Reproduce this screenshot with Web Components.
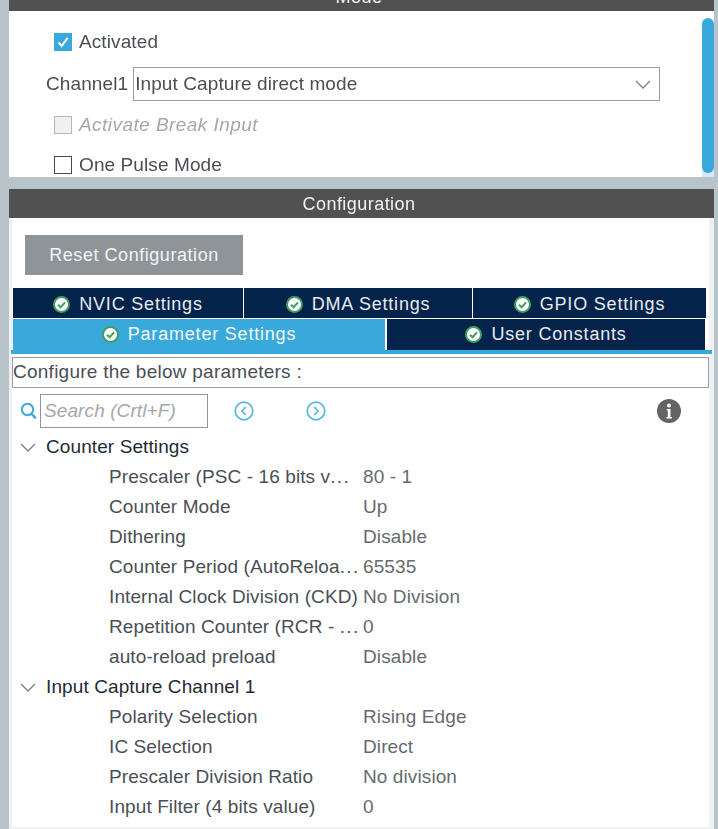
<!DOCTYPE html>
<html>
<head>
<meta charset="utf-8">
<style>
  html, body { margin: 0; height: 829px; overflow: hidden; background: #b8c4ca; }
  body { font: 19px "Liberation Sans", Arial, sans-serif; color: #4a4f55; }
</style>
</head>
<body>
<cube-app>
  <cube-panel title="Mode" slot="mode">
    <mode-form></mode-form>
  </cube-panel>
  <cube-panel title="Configuration" slot="config">
    <config-form></config-form>
  </cube-panel>
</cube-app>

<script>
const checkIcon = `<svg width="17" height="17" viewBox="0 0 17 17"><circle cx="8.5" cy="8.5" r="7.5" fill="#fff" stroke="#3f9e63" stroke-width="2"/><path d="M5 8.7l2.6 2.5L12 6.4" fill="none" stroke="#3f9e63" stroke-width="2"/></svg>`;
const chevron = `<svg width="16" height="9" viewBox="0 0 16 9"><path d="M1 1l7 7 7-7" fill="none" stroke="#7d8388" stroke-width="1.4"/></svg>`;

class CubeApp extends HTMLElement {
  connectedCallback() {
    this.attachShadow({ mode: 'open' });
    this.shadowRoot.innerHTML = `
      <style>
        :host { display: block; padding: 0 4px 0 9px; margin-top: -18px; filter: blur(.35px); }
        .stack { display: flex; flex-direction: column; gap: 12px; }
      </style>
      <div class="stack">
        <slot name="mode"></slot>
        <slot name="config"></slot>
      </div>`;
  }
}

class CubePanel extends HTMLElement {
  connectedCallback() {
    this.attachShadow({ mode: 'open' });
    this.shadowRoot.innerHTML = `
      <style>
        :host { display: block; }
        header {
          height: 29px; box-sizing: border-box; background: #505150; color: #f2f2f2;
          display: flex; align-items: center; justify-content: center;
          font-size: 18px; letter-spacing: .45px; padding: 1px 5px 0 0;
        }
      </style>
      <header>${this.getAttribute('title')}</header>
      <slot></slot>`;
  }
}

class CubeCheck extends HTMLElement {
  connectedCallback() {
    const state = this.getAttribute('state') || 'off';
    const tick = state === 'on'
      ? '<svg width="18" height="18" viewBox="0 0 18 18"><path d="M4.5 9.5l3.2 3.4 6-8" fill="none" stroke="#fff" stroke-width="2"/></svg>' : '';
    this.attachShadow({ mode: 'open' });
    this.shadowRoot.innerHTML = `
      <style>
        :host { display: flex; align-items: center; gap: 7px; height: 20px; letter-spacing: .1px; }
        .box { width: 18px; height: 18px; box-sizing: border-box; flex: none; }
        .on { background: #39a9dc; }
        .off { border: 1.5px solid #4a4a4a; background: #fff; }
        .dis { border: 1.5px solid #b5b8ba; background: #eff0f1; }
        svg { display: block; }
        .dis + span { color: #a5a8aa; font-style: italic; letter-spacing: .45px; }
      </style>
      <div class="box ${state}">${tick}</div><span><slot></slot></span>`;
  }
}

class CubeSelect extends HTMLElement {
  connectedCallback() {
    this.attachShadow({ mode: 'open' });
    this.shadowRoot.innerHTML = `
      <style>
        :host {
          display: flex; align-items: center; justify-content: space-between;
          width: 527px; height: 34px; box-sizing: border-box;
          border: 1.5px solid #9a9ea1; padding: 0 8px 0 1px; letter-spacing: .1px;
        }
        svg { display: block; }
      </style>
      <span><slot></slot></span>${chevron}`;
  }
}

class ModeForm extends HTMLElement {
  connectedCallback() {
    this.attachShadow({ mode: 'open' });
    this.shadowRoot.innerHTML = `
      <style>
        :host {
          display: block; height: 166px; box-sizing: border-box; background: #fff;
          padding-top: 21px; position: relative;
        }
        .check { margin-left: 45px; }
        .channel { display: flex; align-items: center; gap: 5px; margin: 15px 0 14px 37px; letter-spacing: .1px; }
        .gap { height: 20px; }
        .track {
          position: absolute; right: 0; bottom: 0; width: 12px; height: 10px; background: #d6e8f4;
        }
        .scroll {
          position: absolute; right: 0; top: 7px; width: 12px; height: 155px;
          background: #39a9dc; border-radius: 6px;
        }
      </style>
      <cube-check class="check" state="on">Activated</cube-check>
      <div class="channel"><span>Channel1</span><cube-select>Input Capture direct mode</cube-select></div>
      <cube-check class="check" state="dis">Activate Break Input</cube-check>
      <div class="gap"></div>
      <cube-check class="check" state="off">One Pulse Mode</cube-check>
      <div class="track"></div>
      <div class="scroll"></div>`;
  }
}

class CubeTab extends HTMLElement {
  connectedCallback() {
    this.attachShadow({ mode: 'open' });
    this.shadowRoot.innerHTML = `
      <style>
        :host {
          display: flex; align-items: center; justify-content: center; gap: 9px;
          background: #03234b; color: #e6ebf0; font-size: 18px; letter-spacing: .8px;
        }
        :host([active]) { background: #39a9dc; color: #f4fafd; }
        svg { display: block; }
      </style>
      ${checkIcon}<span><slot></slot></span>`;
  }
}

class CubeGroup extends HTMLElement {
  connectedCallback() {
    this.attachShadow({ mode: 'open' });
    this.shadowRoot.innerHTML = `
      <style>
        :host { display: block; }
        .head { display: flex; align-items: center; height: 30px; color: #1f2a38; letter-spacing: .1px; }
        .head svg { margin: 0 10px 0 1px; display: block; }
      </style>
      <div class="head">${chevron}<span>${this.getAttribute('label')}</span></div>
      <slot></slot>`;
  }
}

class CubeRow extends HTMLElement {
  connectedCallback() {
    const label = this.getAttribute('label').replace('...', '<span class="dots">...</span>');
    this.attachShadow({ mode: 'open' });
    this.shadowRoot.innerHTML = `
      <style>
        :host { display: flex; height: 30px; align-items: center; padding-left: 90px; letter-spacing: .1px; white-space: nowrap; }
        .k { width: 254px; flex: none; }
        .dots { letter-spacing: 1.4px; }
        .v { color: #666b70; }
      </style>
      <span class="k">${label}</span><span class="v"><slot></slot></span>`;
  }
}

class ConfigForm extends HTMLElement {
  connectedCallback() {
    this.attachShadow({ mode: 'open' });
    this.shadowRoot.innerHTML = `
      <style>
        :host {
          display: block; height: 611px; box-sizing: border-box; background: #fff;
          box-shadow: inset 3px 0 #f0f1f2, inset -5px 0 #f0f1f2, inset 0 -2px #f0f1f2;
          padding-top: 17px; overflow: hidden;
        }
        button {
          display: block; margin-left: 16px; width: 218px; height: 40px; border: 0;
          background: #8f9498; color: #f2f4f5; font: inherit; font-size: 18px; letter-spacing: .55px; padding: 0;
        }
        .tabs { margin: 13px 0 0 4px; width: 693px; display: grid; gap: 1px; }
        .row1 { display: grid; grid-template-columns: 230px 228px 233px; gap: 1px; height: 30px; }
        .row1 cube-tab { padding-top: 2px; }
        .row2 { display: grid; grid-template-columns: 372px 318px; gap: 2px; height: 31px; }
        .line { height: 4px; background: #39a9dc; margin-left: 2px; width: 701px; }
        .note {
          margin: 3px 0 0 3px; width: 697px; height: 31px; box-sizing: border-box;
          border: 1.5px solid #9a9ea1; display: flex; align-items: center; padding-bottom: 1px;
          letter-spacing: .25px;
        }
        .tools { display: flex; align-items: center; height: 34px; margin-top: 6px; padding-left: 11px; }
        .tools svg { display: block; flex: none; }
        .search {
          width: 168px; height: 34px; box-sizing: border-box; margin-left: 3px;
          border: 1.5px solid #8f9498; color: #a5a8aa; font-style: italic;
          display: flex; align-items: center; padding-left: 3px; letter-spacing: .1px;
        }
        .back { margin-left: 26px; }
        .next { margin-left: 52px; }
        .info { margin-left: 331px; }
        .tree { margin: 4px 0 0 10px; }
      </style>
      <button>Reset Configuration</button>
      <div class="tabs">
        <div class="row1">
          <cube-tab>NVIC Settings</cube-tab>
          <cube-tab>DMA Settings</cube-tab>
          <cube-tab>GPIO Settings</cube-tab>
        </div>
        <div class="row2">
          <cube-tab active>Parameter Settings</cube-tab>
          <cube-tab>User Constants</cube-tab>
        </div>
      </div>
      <div class="line"></div>
      <div class="note">Configure the below parameters :</div>
      <div class="tools">
        <svg width="17" height="18" viewBox="0 0 17 18"><circle cx="7.5" cy="7.5" r="5.7" fill="none" stroke="#39a9dc" stroke-width="2"/><path d="M11.5 11.8l4.3 4.6" stroke="#39a9dc" stroke-width="2.4"/></svg>
        <div class="search">Search (Crtl+F)</div>
        <svg class="back" width="20" height="20" viewBox="0 0 20 20"><circle cx="10" cy="10" r="8.8" fill="none" stroke="#5cb6e0" stroke-width="1.7"/><path d="M11.8 6L8 10l3.8 4" fill="none" stroke="#5cb6e0" stroke-width="1.7"/></svg>
        <svg class="next" width="20" height="20" viewBox="0 0 20 20"><circle cx="10" cy="10" r="8.8" fill="none" stroke="#5cb6e0" stroke-width="1.7"/><path d="M8.2 6L12 10l-3.8 4" fill="none" stroke="#5cb6e0" stroke-width="1.7"/></svg>
        <svg class="info" width="24" height="24" viewBox="0 0 24 24"><circle cx="12" cy="12" r="12" fill="#636363"/><circle cx="12" cy="6.5" r="2" fill="#fff"/><path d="M9.8 10h3.7v8h1.4v1.6H9.4V18h1.4v-6.4h-1z" fill="#fff"/></svg>
      </div>
      <div class="tree">
        <cube-group label="Counter Settings">
          <cube-row label="Prescaler (PSC - 16 bits v...">80 - 1</cube-row>
          <cube-row label="Counter Mode">Up</cube-row>
          <cube-row label="Dithering">Disable</cube-row>
          <cube-row label="Counter Period (AutoReloa...">65535</cube-row>
          <cube-row label="Internal Clock Division (CKD)">No Division</cube-row>
          <cube-row label="Repetition Counter (RCR - ...">0</cube-row>
          <cube-row label="auto-reload preload">Disable</cube-row>
        </cube-group>
        <cube-group label="Input Capture Channel 1">
          <cube-row label="Polarity Selection">Rising Edge</cube-row>
          <cube-row label="IC Selection">Direct</cube-row>
          <cube-row label="Prescaler Division Ratio">No division</cube-row>
          <cube-row label="Input Filter (4 bits value)">0</cube-row>
        </cube-group>
      </div>`;
  }
}

customElements.define('cube-app', CubeApp);
customElements.define('cube-panel', CubePanel);
customElements.define('cube-check', CubeCheck);
customElements.define('cube-select', CubeSelect);
customElements.define('mode-form', ModeForm);
customElements.define('cube-tab', CubeTab);
customElements.define('cube-group', CubeGroup);
customElements.define('cube-row', CubeRow);
customElements.define('config-form', ConfigForm);
</script>
</body>
</html>
